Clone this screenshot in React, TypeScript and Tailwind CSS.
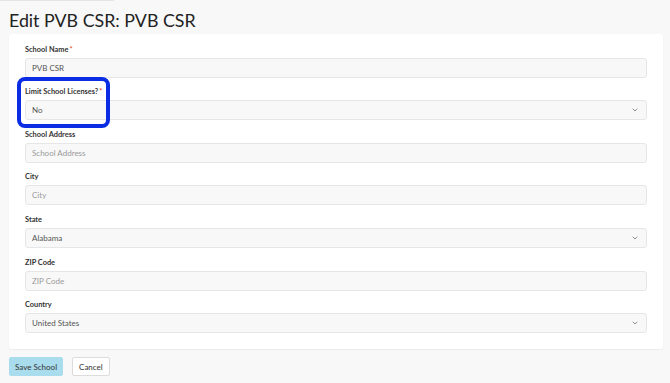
import React from 'react';
import { ChevronDown } from 'lucide-react';

type Field = {
  label: string;
  required?: boolean;
  value?: string;
  placeholder?: string;
  select?: boolean;
};

const fields: Field[] = [
  { label: 'School Name', required: true, value: 'PVB CSR' },
  { label: 'Limit School Licenses?', required: true, value: 'No', select: true },
  { label: 'School Address', placeholder: 'School Address' },
  { label: 'City', placeholder: 'City' },
  { label: 'State', value: 'Alabama', select: true },
  { label: 'ZIP Code', placeholder: 'ZIP Code' },
  { label: 'Country', value: 'United States', select: true },
];

function FormField({ field }: { field: Field }) {
  return (
    <div className="flex flex-col gap-[3px] h-[42.67px]">
      <label className="text-[7.4px] leading-[11px] font-bold text-[#333]">
        {field.label}
        {field.required && <span className="text-[#e8542c] ml-[1px]">*</span>}
      </label>
      <div className="h-[20px] flex items-center justify-between rounded-[3px] border border-[#e6e6e6] bg-[#f8f8f8] pl-[6px] pr-[7px]">
        <span className={field.value ? 'text-[8px] text-[#555]' : 'text-[8px] text-[#9a9a9a]'}>
          {field.value ?? field.placeholder}
        </span>
        {field.select && <ChevronDown size={8} strokeWidth={2.2} className="text-[#666]" />}
      </div>
    </div>
  );
}

export default function App() {
  return (
    <div className="w-[670px] h-[383px] bg-[#f8f8f8] overflow-hidden relative" style={{ fontFamily: 'Lato, "Open Sans", sans-serif' }}>
      <div className="w-[114px] h-[1px] bg-[#e4e4e4]" />
      <h1 className="pl-[9px] pt-[8px] h-[33px] text-[17.8px] leading-[22px] text-[#222]">Edit PVB CSR: PVB CSR</h1>

      <div className="relative ml-[9px] w-[654px] bg-white rounded-[3px] shadow-[0_1px_2px_rgba(0,0,0,0.06)] pl-[16px] pr-[16px] pt-[9.5px] pb-[7px]">
        {fields.map(f => (
          <FormField key={f.label} field={f} />
        ))}

        {/* highlight around the licenses field */}
        <div className="absolute left-[8px] top-[43px] w-[93px] h-[51px] rounded-[8px] border-[4px] border-[#0a2de4]" />
      </div>

      <div className="flex gap-[9px] pl-[9px] pt-[8px]">
        <button className="h-[19px] px-[6px] rounded-[2px] bg-[#a9dcec] text-[8px] text-[#333]">Save School</button>
        <button className="h-[19px] px-[6px] rounded-[2px] bg-white border border-[#dcdcdc] text-[8px] text-[#333]">Cancel</button>
      </div>
    </div>
  );
}
